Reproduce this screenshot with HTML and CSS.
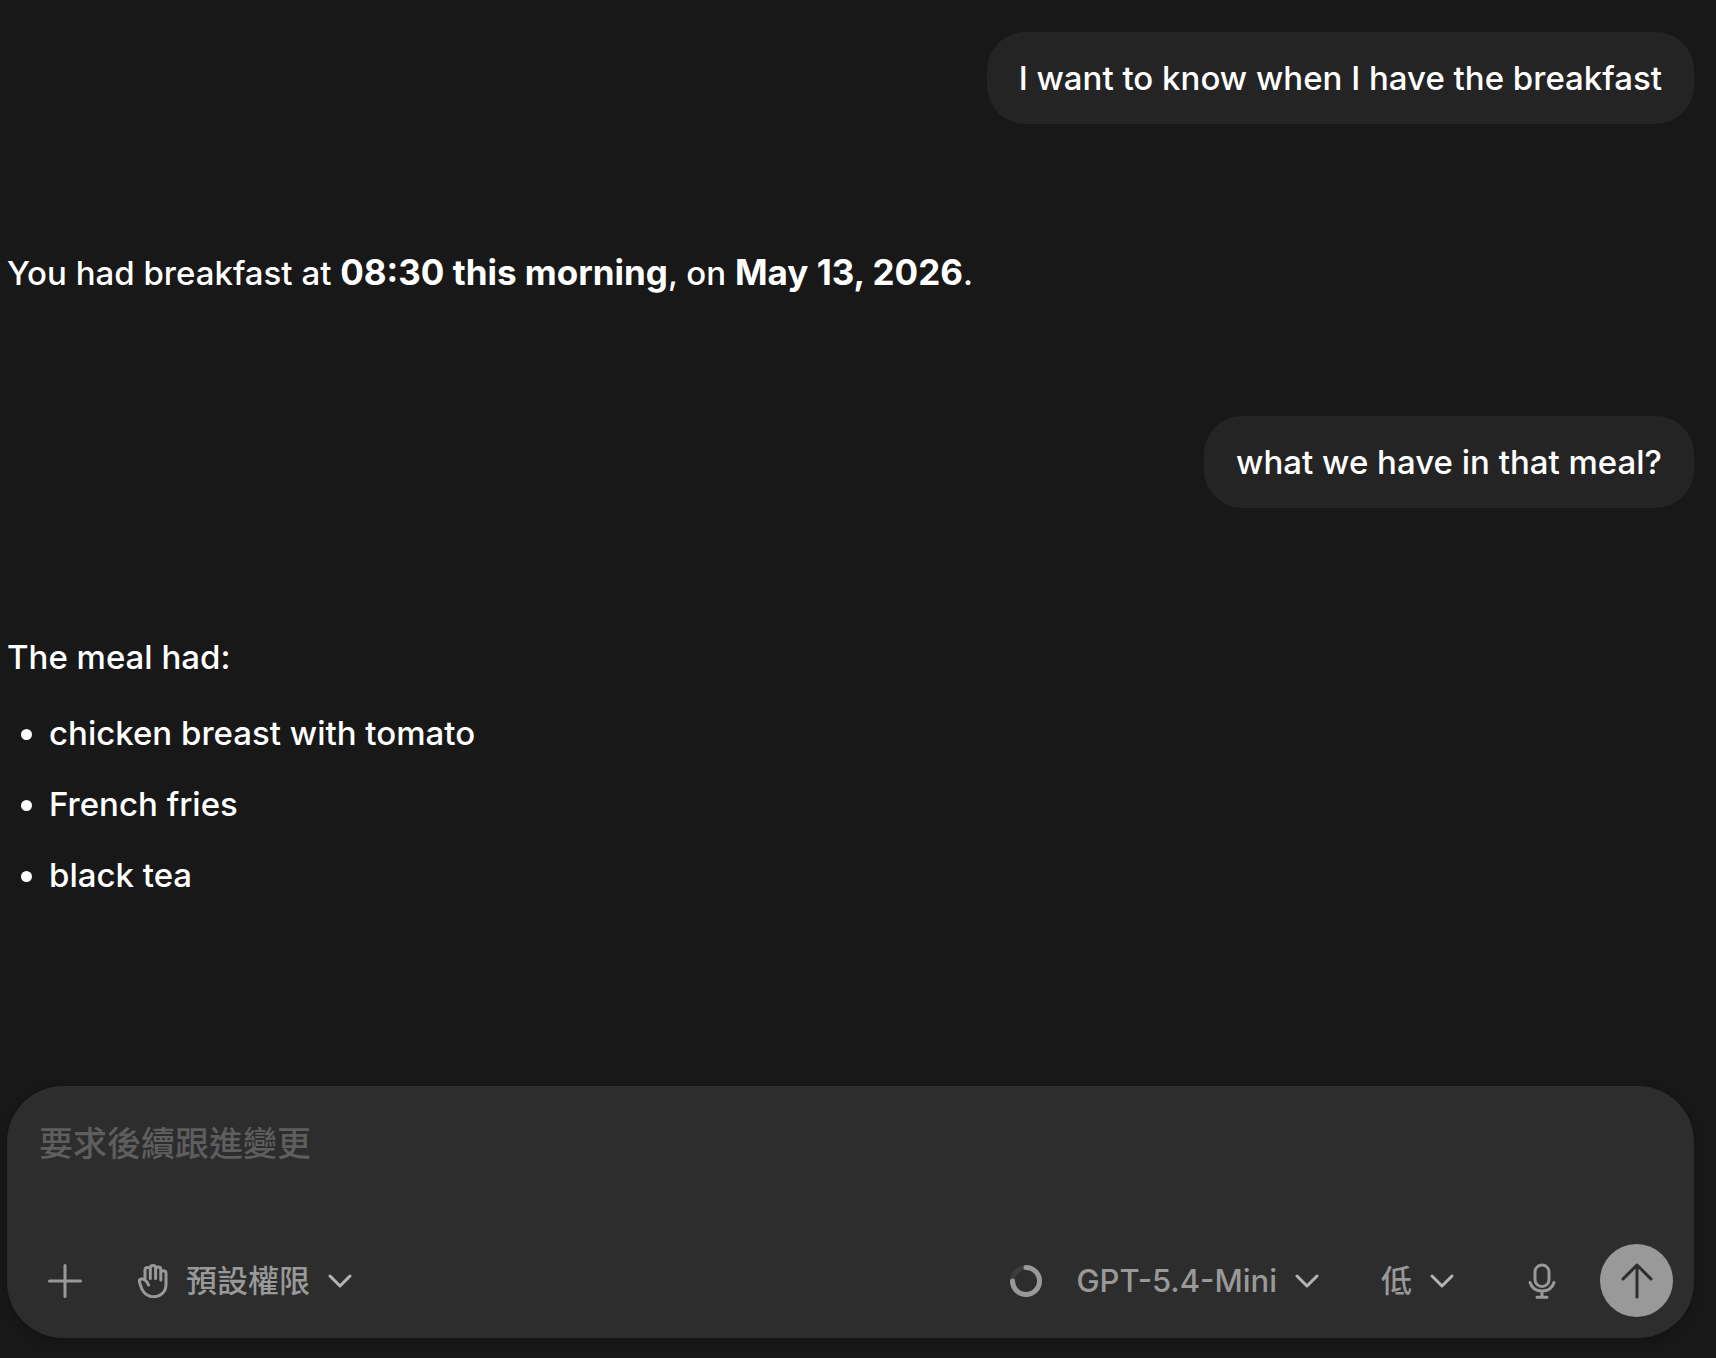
FILE: index.html
```html
<!DOCTYPE html>
<html lang="zh-Hant">
<head>
  <meta charset="utf-8">
  <meta name="viewport" content="width=device-width, initial-scale=1">
  <title>Chat</title>
  <link rel="stylesheet" href="styles.css">
</head>
<body>
  <div class="chat">
    <main class="thread" lang="en">
      <p class="message message-user">I want to know when I have the breakfast</p>
      <div class="message message-assistant">
        <p>You had breakfast at <strong>08:30 this morning</strong>, on <strong>May 13, 2026</strong>.</p>
      </div>
      <p class="message message-user">what we have in that meal?</p>
      <div class="message message-assistant">
        <p>The meal had:</p>
        <ul class="list">
          <li>chicken breast with tomato</li>
          <li>French fries</li>
          <li>black tea</li>
        </ul>
      </div>
    </main>

    <form class="composer">
      <textarea class="composer-input" rows="1" aria-label="要求後續跟進變更" placeholder="要求後續跟進變更"></textarea>
      <div class="toolbar">
        <div class="group group-start">
          <button class="tool" type="button" aria-label="新增">
            <svg width="34" height="34" viewBox="0 0 34 34"><path d="M17 1.500v31M1.500 17h31"/></svg>
          </button>
          <button class="tool" type="button">
            <svg width="30" height="34" viewBox="0 0 30 34"><path d="M10.500 21C9.500 18.500 7.500 15.600 4.700 15 2.500 14.600 1 15.800 1.500 17.800 2.500 21.500 3 24.500 5.500 27.700 8 31 11.500 32.700 15.500 32.700 22.700 32.700 28 28 28 20.500V9.300C28 5.800 22.800 5.800 22.800 9.300V16M22.800 9.300V5.500C22.800 2 17.600 2 17.600 5.500V14.500M17.600 5.500V4C17.600 .7 12.300 .7 12.300 4V14.500M12.300 5.800C12.300 2.600 7 2.600 7 6V16.300"/></svg>
            <span>預設權限</span>
            <svg class="chevron" width="24" height="14" viewBox="0 0 24 14"><path d="M2 2l10 10L22 2"/></svg>
          </button>
        </div>
        <div class="group group-end">
          <svg class="usage" width="32" height="32" viewBox="0 0 32 32" role="img" aria-label="Usage">
            <circle class="usage-track" cx="16" cy="16" r="13.500"/>
            <path d="M16 2.500A13.500 13.500 0 1 1 2.500 16"/>
          </svg>
          <button class="tool" type="button">
            <span>GPT-5.4-Mini</span>
            <svg class="chevron" width="24" height="14" viewBox="0 0 24 14"><path d="M2 2l10 10L22 2"/></svg>
          </button>
          <button class="tool tool-effort" type="button">
            <span>低</span>
            <svg class="chevron" width="24" height="14" viewBox="0 0 24 14"><path d="M2 2l10 10L22 2"/></svg>
          </button>
          <button class="tool tool-mic" type="button" aria-label="語音輸入">
            <svg width="28" height="36" viewBox="0 0 28 36"><rect x="7" y="2" width="14" height="21.500" rx="7"/><path d="M2 19.500C4 25.500 8.500 28 14 28S24 25.500 26 19.500M14 28v6M9 34.200h10"/></svg>
          </button>
          <button class="send" type="submit" aria-label="傳送">
            <svg width="32" height="36" viewBox="0 0 32 36"><path d="M16 34V2M2 16L16 2l14 14"/></svg>
          </button>
        </div>
      </div>
    </form>
  </div>
</body>
</html>
```
FILE: styles.css
```css
* {
  box-sizing: border-box;
}

body {
  margin: 0;
  background: #181818;
  color: #fff;
  font: 500 33px/52px Inter, "Noto Sans CJK TC", sans-serif;
}

p,
ul {
  margin: 0;
}

strong {
  font-size: 35px;
  font-weight: 700;
  line-height: 1;
}

.chat {
  display: flex;
  flex-direction: column;
  min-height: 100vh;
  padding: 32px 22px 20px 7px;
}

.thread {
  display: flex;
  flex: 1;
  flex-direction: column;
}

.message-user {
  align-self: flex-end;
  max-width: 80%;
  padding: 20px 32px;
  border-radius: 38px;
  background: #242424;
}

.message-assistant {
  padding: 123px 0 117px;
}

.list {
  display: grid;
  gap: 19px;
  margin-top: 24px;
  padding-left: 42px;
}

.composer {
  padding: 32px 21px 21px 32px;
  border-radius: 56px;
  background: #2d2d2d;
  box-shadow: 0 0 0 1px #151515, 0 4px 12px #00000033;
}

.composer-input {
  display: block;
  width: 100%;
  height: 126px;
  padding: 0;
  border: 0;
  outline: 0;
  resize: none;
  background: none;
  color: inherit;
  font: inherit;
  font-size: 34px;
}

.composer-input::placeholder {
  color: #5e5e5e;
  opacity: 1;
}

.toolbar,
.group,
.tool {
  display: flex;
  align-items: center;
}

.toolbar {
  justify-content: space-between;
}

.group-start {
  gap: 56px;
  padding-left: 9px;
}

.tool {
  gap: 18px;
  padding: 0;
  border: 0;
  background: none;
  color: #999;
  font: inherit;
  font-size: 31px;
}

svg {
  fill: none;
  stroke: currentColor;
  stroke-width: 3;
  stroke-linecap: round;
  stroke-linejoin: round;
}

.chevron {
  color: #b4b4b4;
}

.usage {
  margin-right: 34px;
  color: #999;
  stroke-width: 5;
}

.usage-track {
  stroke: #3c3c3c;
}

.tool-effort {
  margin-left: 62px;
}

.tool-mic {
  margin-left: 74px;
}

.send {
  display: grid;
  place-items: center;
  width: 73px;
  height: 73px;
  margin-left: 44px;
  padding: 0;
  border: 0;
  border-radius: 50%;
  background: #999;
  color: #2d2d2d;
}
```
